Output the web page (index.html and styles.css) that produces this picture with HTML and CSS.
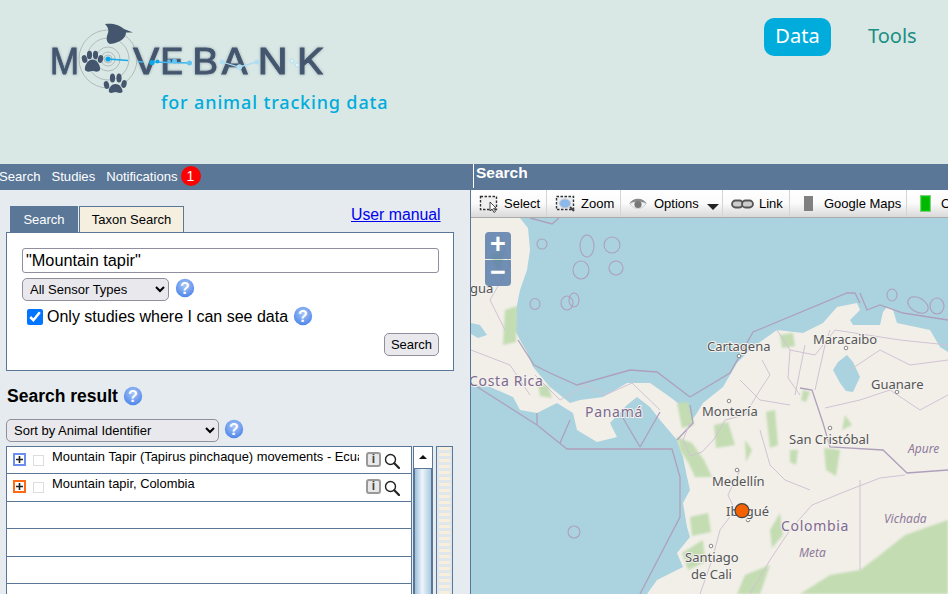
FILE: index.html
```html
<!DOCTYPE html>
<html lang="en">
<head>
    <meta charset="UTF-8">
    <meta name="viewport" content="width=device-width, initial-scale=1.0">
    <title>Movebank - Search</title>
    <link rel="stylesheet" href="styles.css">
</head>
<body>
    <svg class="defs" width="0" height="0">
        <defs>
            <radialGradient id="helpFill" cx="50%" cy="35%" r="65%">
                <stop offset="0" stop-color="#a9c6f6"/>
                <stop offset="1" stop-color="#4f86ea"/>
            </radialGradient>
        </defs>
        <symbol id="help" viewBox="0 0 20 20">
            <circle cx="10" cy="10" r="9.2" fill="url(#helpFill)"/>
            <text x="10" y="15.5" text-anchor="middle" class="help-mark">?</text>
        </symbol>
        <symbol id="lens" viewBox="0 0 16 16">
            <circle cx="6.5" cy="6.5" r="5" fill="#fff" stroke="#222" stroke-width="1.4"/>
            <path d="M10.3 10.3 L15 15" stroke="#222" stroke-width="2.2" stroke-linecap="round"/>
        </symbol>
        <symbol id="plus" viewBox="0 0 9 9">
            <path d="M4.5 1 V8 M1 4.5 H8" stroke="#222" stroke-width="1.6"/>
        </symbol>
    </svg>

    <header class="site-header">
        <svg class="logo" width="400" height="120" viewBox="0 0 400 120">
            <g fill="none" stroke="#aeb4b6" stroke-width="0.9">
                <circle cx="108" cy="59" r="29"/>
                <circle cx="108" cy="59" r="21"/>
                <circle cx="108" cy="59" r="12"/>
                <circle cx="108" cy="59" r="7"/>
                <circle cx="108" cy="59" r="4"/>
            </g>
            <text x="50" y="74" class="logo-word" textLength="29" lengthAdjust="spacingAndGlyphs">M</text>
            <text x="115 139 167 192 224 258" y="74" class="logo-word" transform="scale(1.15 1)">VEBANK</text>
            <path class="logo-dark" d="M105 24 C111 23 119 24 124 29 L133 32.5 L126 32.5 C126 38 120 43 110 44 C106 42 106 38 108 33 C109 30 108 27 105 24 Z"/>
            <g class="logo-dark">
                <ellipse cx="84.5" cy="59" rx="2.6" ry="4" transform="rotate(-15 84.5 59)"/>
                <ellipse cx="89.5" cy="55" rx="2.6" ry="4.2"/>
                <ellipse cx="95.5" cy="55" rx="2.6" ry="4.2"/>
                <ellipse cx="100.5" cy="59" rx="2.6" ry="4" transform="rotate(15 100.5 59)"/>
                <path d="M92.5 59.5 C97 59.5 101 66 100 70 C98 73 94 71 92.5 71 C91 71 87 73 85 70 C84 66 88 59.5 92.5 59.5 Z"/>
                <ellipse cx="106.5" cy="85" rx="2.6" ry="4" transform="rotate(-15 106.5 85)"/>
                <ellipse cx="112.5" cy="78" rx="2.6" ry="4.5"/>
                <ellipse cx="119" cy="78" rx="2.6" ry="4.5"/>
                <ellipse cx="124" cy="84" rx="2.6" ry="4" transform="rotate(15 124 84)"/>
                <path d="M115.5 84 C120 84 123 89 122.5 92 C120 94 117 92 115.5 92 C114 92 111 94 109 92 C108 89 111 84 115.5 84 Z"/>
            </g>
            <path d="M108 59 L128 60.5" stroke="#19a9e6" stroke-width="1.6"/>
            <path d="M138 61.5 L143 62 M152 62 L189 63" stroke="#3db6ee" stroke-width="1.3"/>
            <path d="M222 62 L239 67 L257 62" stroke="#a9dcf3" stroke-width="1.3" fill="none"/>
            <g fill="#0da6e6">
                <circle cx="108" cy="59" r="2.6"/>
                <circle cx="152" cy="62.5" r="2.6"/>
                <circle cx="157.5" cy="61.5" r="2"/>
            </g>
            <g fill="#62c3ef">
                <circle cx="169" cy="61" r="1.8"/>
                <circle cx="174.5" cy="61" r="2.5"/>
                <circle cx="189.5" cy="63" r="2.5"/>
            </g>
            <g fill="#b1def2">
                <circle cx="222" cy="62" r="2.5"/>
                <circle cx="239.5" cy="67" r="2.8"/>
                <circle cx="257" cy="62" r="2.5"/>
            </g>
            <circle cx="292" cy="61" r="2" fill="#e4f3f6" stroke="#b1def2"/>
            <circle cx="297" cy="65" r="2" fill="#e4f3f6" stroke="#b1def2"/>
        </svg>
        <div class="logo-tag">for animal tracking data</div>
        <nav class="site-nav">
            <a class="site-link active">Data</a>
            <a class="site-link">Tools</a>
        </nav>
    </header>

    <div class="bar">
        <div class="bar-left">
            <a>Search</a>
            <a>Studies</a>
            <a>Notifications</a>
            <span class="badge">1</span>
        </div>
        <div class="bar-right">Search</div>
    </div>

    <main class="main">
        <section class="side">
            <div class="tab-row">
                <span class="tab tab-on">Search</span>
                <span class="tab tab-off">Taxon Search</span>
                <a class="manual" href="#">User manual</a>
            </div>
            <form class="search-box">
                <input type="text" class="query" value="&quot;Mountain tapir&quot;">
                <div class="line">
                    <select class="pick pick-sensor"><option>All Sensor Types</option></select>
                    <svg class="help"><use href="#help"/></svg>
                </div>
                <label class="line check-line">
                    <input type="checkbox" class="check" checked>
                    <span>Only studies where I can see data</span>
                    <svg class="help"><use href="#help"/></svg>
                </label>
                <div class="actions"><button type="button" class="btn">Search</button></div>
            </form>

            <h2 class="result-title">Search result <svg class="help"><use href="#help"/></svg></h2>
            <div class="line sort-line">
                <select class="pick pick-sort"><option>Sort by Animal Identifier</option></select>
                <svg class="help"><use href="#help"/></svg>
            </div>

            <div class="results">
                <div class="list">
                    <div class="row">
                        <span class="expand expand-blue"><svg width="9" height="9"><use href="#plus"/></svg></span>
                        <span class="tick"></span>
                        <span class="name">Mountain Tapir (Tapirus pinchaque) movements - Ecuador</span>
                        <span class="info">i</span>
                        <svg class="lens"><use href="#lens"/></svg>
                    </div>
                    <div class="row">
                        <span class="expand expand-orange"><svg width="9" height="9"><use href="#plus"/></svg></span>
                        <span class="tick"></span>
                        <span class="name">Mountain tapir, Colombia</span>
                        <span class="info">i</span>
                        <svg class="lens"><use href="#lens"/></svg>
                    </div>
                    <div class="row"></div>
                    <div class="row"></div>
                    <div class="row"></div>
                    <div class="row"></div>
                </div>
                <div class="scroll">
                    <div class="scroll-up"></div>
                    <div class="scroll-track"></div>
                </div>
                <div class="strip"></div>
            </div>
        </section>

        <section class="map-pane">
            <div class="toolbar">
                <div class="tool tool-select">
                    <svg width="20" height="19" viewBox="0 0 20 19">
                        <rect x="1.5" y="2.5" width="16" height="13" fill="#f0f0f0" stroke="#333" stroke-width="1.4" stroke-dasharray="2.5 1.5"/>
                        <path d="M11 8 V17 L13 15 L15 18.5 L16.5 17.5 L14.5 14.5 L17 14 Z" fill="#fff" stroke="#333" stroke-width="0.9"/>
                    </svg>
                    <span>Select</span>
                </div>
                <div class="tool tool-zoom">
                    <svg width="21" height="19" viewBox="0 0 21 19">
                        <rect x="1.5" y="2.5" width="17" height="13" fill="#e8eef4" stroke="#333" stroke-width="1.4" stroke-dasharray="2.5 1.5"/>
                        <ellipse cx="10" cy="9.5" rx="5.5" ry="4.5" fill="#8db8ea" stroke="#ccc"/>
                        <path d="M15 13 L19 17" stroke="#444" stroke-width="2"/>
                    </svg>
                    <span>Zoom</span>
                </div>
                <div class="tool tool-options">
                    <svg width="20" height="14" viewBox="0 0 20 14">
                        <path d="M1 7 C5 0 15 0 19 7 C15 4 5 4 1 7 Z" fill="#888"/>
                        <path d="M2 7 C6 13 14 13 18 7 C14 4 6 4 2 7 Z" fill="#f2f2f2" stroke="#bbb" stroke-width="0.6"/>
                        <circle cx="10" cy="7.5" r="3.6" fill="#777"/>
                    </svg>
                    <span>Options</span>
                    <i class="drop"></i>
                </div>
                <div class="tool tool-link">
                    <svg width="23" height="10" viewBox="0 0 23 10">
                        <rect x="1" y="1.5" width="11" height="7" rx="3.5" fill="#ccc" stroke="#555" stroke-width="1.8"/>
                        <rect x="11" y="1.5" width="11" height="7" rx="3.5" fill="#ccc" stroke="#555" stroke-width="1.8"/>
                    </svg>
                    <span>Link</span>
                </div>
                <div class="tool tool-google">
                    <i class="swatch swatch-grey"></i>
                    <span>Google Maps</span>
                </div>
                <div class="tool tool-last">
                    <i class="swatch swatch-green"></i>
                    <span>Other</span>
                </div>
            </div>

            <div class="map">
                <svg class="map-svg" width="477" height="376" viewBox="471 218 477 376">
                    <rect x="471" y="218" width="477" height="376" fill="#aad3df"/>
                    <g class="soft">
                        <path fill="#f2efe9" d="M471 218 L520 218 L528 228 L530 250 L527 270 L520 290 L516 310 L515 330 L520 340 L527 352 L533 367 L550 387 L570 403 L580 400 L603 397 L627 383 L650 383 L670 397 L683 407 L690 423 L697 413 L703 403 L723 387 L737 363 L753 347 L777 330 L803 333 L823 323 L837 307 L857 303 L860 310 L850 320 L853 325 L880 325 L883 312 L887 307 L893 310 L897 323 L930 330 L940 347 L948 352 L948 594 L647 594 L657 580 L683 567 L677 553 L690 537 L687 527 L683 503 L690 490 L687 477 L683 457 L677 440 L660 420 L650 407 L637 397 L627 405 L610 423 L617 437 L597 442 L577 430 L573 413 L557 403 L537 413 L520 410 L513 397 L490 387 L471 385 Z"/>
                        <path fill="#aad3df" d="M833 370 L838 362 L847 355 L853 362 L860 377 L853 392 L846 391 L840 383 Z"/>
                        <path fill="#aad3df" d="M471 323 L480 325 L487 335 L478 338 L471 334 Z"/>
                    </g>
                    <g class="forest">
                        <path d="M880 555 L905 535 L925 528 L948 520 L948 594 L800 594 L830 575 L860 570 Z"/>
                        <path d="M677 437 L692 443 L704 460 L712 477 L695 477 L688 462 L680 450 Z"/>
                        <path d="M690 517 L708 513 L711 532 L692 536 Z"/>
                        <path d="M682 553 L703 540 L705 562 L688 570 Z"/>
                        <path d="M766 412 L775 410 L778 445 L770 448 Z"/>
                        <path d="M714 425 L728 422 L735 445 L716 448 Z"/>
                        <path d="M677 403 L688 402 L694 425 L682 428 Z"/>
                        <path d="M505 310 L517 306 L516 342 L503 345 Z"/>
                        <path d="M538 383 L548 386 L552 398 L540 396 Z"/>
                        <path d="M780 335 L793 333 L795 346 L782 348 Z"/>
                        <path d="M803 390 L810 392 L806 402 L801 400 Z"/>
                        <path d="M824 448 L840 450 L836 476 L826 470 Z"/>
                        <path d="M737 594 L745 575 L770 565 L760 594 Z"/>
                        <path d="M770 530 L780 513 L783 535 L772 548 Z"/>
                        <path d="M790 450 L798 450 L796 465 L790 462 Z"/>
                        <path d="M490 255 L505 250 L500 275 Z"/>
                        <path d="M845 415 L852 425 L842 430 Z"/>
                        <path d="M745 440 L752 450 L746 462 Z"/>
                    </g>
                    <g class="soft">
                        <g fill="none" stroke="#aea0bb" stroke-width="1.3">
                            <path d="M690 397 L730 373 L753 332 L847 293 L855 293 L860 303"/>
                            <path d="M860 293 L867 310 L880 305 L903 313 L948 320"/>
                            <path d="M550 373 L577 385 L630 370 L657 372 L690 397"/>
                            <path d="M518 340 L534 365 L550 373"/>
                            <path d="M471 383 L537 425 L567 449 L672 449 L680 477 L680 517 L640 594"/>
                            <path d="M640 447 L623 418 M640 447 L660 412 M560 443 L570 420 M537 425 L537 413"/>
                            <path d="M530 218 L552 224 L559 218"/>
                            <path d="M677 440 L693 423 L690 405"/>
                            <path d="M800 388 L812 390 L823 423 L830 447 L883 450 L907 473 L948 470"/>
                        </g>
                        <g fill="none" stroke="#aea0bb" stroke-width="1.1">
                            <ellipse cx="587" cy="246" rx="7" ry="11"/>
                            <ellipse cx="612" cy="245" rx="8" ry="8"/>
                            <ellipse cx="581" cy="270" rx="8" ry="9"/>
                            <ellipse cx="616" cy="268" rx="7" ry="7"/>
                            <circle cx="542" cy="244" r="5"/>
                            <ellipse cx="535" cy="304" rx="5" ry="5.5"/>
                            <ellipse cx="567" cy="303" rx="6" ry="7"/>
                            <ellipse cx="574" cy="300" rx="5" ry="7"/>
                            <circle cx="574" cy="532" r="6"/>
                            <ellipse cx="892" cy="295" rx="5" ry="6"/>
                            <ellipse cx="918" cy="305" rx="11" ry="7" transform="rotate(30 918 305)"/>
                            <ellipse cx="937" cy="306" rx="7" ry="8"/>
                        </g>
                        <g fill="none" stroke="#cfc3d3" stroke-width="1">
                            <path d="M690 423 L683 440 L690 456 L702 452 L715 438 L725 420 L745 415 L760 390 L770 375 L762 360"/>
                            <path d="M777 330 L790 350 L788 378 L800 395"/>
                            <path d="M815 390 L825 345 L830 330"/>
                            <path d="M825 408 L860 400 L890 390 L920 410 L948 395"/>
                            <path d="M850 370 L880 350 L910 365 L948 360"/>
                            <path d="M905 475 L880 478 L849 490 L812 505 L790 530 L770 560 L750 594"/>
                            <path d="M740 470 L728 495 L735 510 L720 530 L712 560 L700 594"/>
                            <path d="M760 430 L770 465 L785 480 L810 490"/>
                            <path d="M860 480 L860 570"/>
                            <path d="M535 375 L560 400 L585 385 L605 395 L632 383 L660 410"/>
                            <path d="M471 350 L510 365 L530 395"/>
                            <path d="M500 235 L510 265 L490 300 L505 330"/>
                            <path d="M790 350 L815 355 L835 330 L900 340 L948 345"/>
                            <path d="M795 395 L805 345 M740 380 L760 400 L790 405"/>
                        </g>
                        <g fill="#fff" stroke="#777" stroke-width="0.9">
                            <circle cx="739" cy="356" r="1.8"/>
                            <circle cx="729" cy="401" r="1.8"/>
                            <circle cx="846" cy="348" r="1.8"/>
                            <circle cx="897" cy="392" r="1.8"/>
                            <circle cx="830" cy="428" r="1.8"/>
                            <circle cx="737" cy="470" r="1.8"/>
                            <circle cx="748" cy="520" r="1.8"/>
                            <circle cx="711" cy="546" r="1.8"/>
                        </g>
                    </g>
                    <g class="place">
                        <text x="707" y="351">Cartagena</text>
                        <text x="813" y="344">Maracaibo</text>
                        <text x="702" y="416">Montería</text>
                        <text x="789" y="444">San Cristóbal</text>
                        <text x="871" y="389">Guanare</text>
                        <text x="712" y="486">Medellín</text>
                        <text x="726" y="516">Ibagué</text>
                        <text x="685" y="562">Santiago</text>
                        <text x="691" y="579">de Cali</text>
                        <text x="470" y="293">gua</text>
                    </g>
                    <g class="country">
                        <text x="585" y="417">Panamá</text>
                        <text x="781" y="531">Colombia</text>
                        <text x="469" y="386">Costa Rica</text>
                    </g>
                    <g class="region">
                        <text x="908" y="453">Apure</text>
                        <text x="884" y="523">Vichada</text>
                        <text x="799" y="557">Meta</text>
                    </g>
                    <circle cx="742" cy="510.7" r="7" fill="#f46200" stroke="#444" stroke-width="1.2"/>
                </svg>
                <div class="zoom-box">
                    <span class="zoom-btn">+</span>
                    <span class="zoom-btn">−</span>
                </div>
            </div>
        </section>
    </main>
</body>
</html>
```

FILE: styles.css
```css
* {
    box-sizing: border-box;
    margin: 0;
    padding: 0;
}

html, body {
    height: 594px;
    overflow: hidden;
}

body {
    font-family: "Liberation Sans", Arial, sans-serif;
    background-color: #e6ebef;
    color: #000;
    display: flex;
    flex-direction: column;
}

.defs {
    display: block;
    height: 0;
}

.help-mark {
    font-family: "Liberation Sans", Arial, sans-serif;
    font-size: 16px;
    font-weight: bold;
    fill: #fff;
}

/* top band */
.site-header {
    height: 164px;
    flex: none;
    background: #d9e8e5;
    position: relative;
}

.logo {
    position: absolute;
    left: 0;
    top: 0;
}

.logo-word {
    font-family: "Inter", sans-serif;
    font-size: 35px;
    font-weight: 400;
    fill: #44566e;
    stroke: #44566e;
    stroke-width: 0.8px;
    filter: drop-shadow(0 0 1.5px rgba(68, 86, 110, 0.45));
}

.logo-dark {
    fill: #44566e;
}

.logo-tag {
    position: absolute;
    left: 161px;
    top: 90px;
    font-family: "Noto Sans", sans-serif;
    font-size: 18px;
    font-weight: 500;
    letter-spacing: 0.85px;
    line-height: 24px;
    color: #00acdc;
    white-space: nowrap;
}

.site-nav {
    position: absolute;
    left: 764px;
    top: 18px;
    display: flex;
    align-items: center;
    gap: 37px;
}

.site-link {
    font-family: "Noto Sans", sans-serif;
    font-size: 20px;
    line-height: 36px;
    height: 38px;
    color: #1a8f84;
}

.site-link.active {
    width: 67px;
    text-align: center;
    color: #fff;
    background: #00acdc;
    border-radius: 10px;
}

/* blue bar */
.bar {
    height: 26px;
    flex: none;
    display: flex;
    background: #5a7797;
    color: #fff;
}

.bar-left {
    width: 473px;
    flex: none;
    display: flex;
    align-items: center;
    font-size: 13.1px;
    padding-bottom: 2px;
    text-indent: -1px;
}

.bar-left a {
    margin-right: 12px;
}

.bar-left a:nth-child(3) {
    margin-right: 3px;
}

.badge {
    width: 20px;
    height: 20px;
    border-radius: 50%;
    background: #f00;
    text-align: center;
    text-indent: 0;
    line-height: 20px;
    font-size: 14px;
}

.bar-right {
    flex: 1;
    border-left: 1px solid #fff;
    height: 24px;
    padding-left: 2px;
    font-size: 15.5px;
    font-weight: bold;
    line-height: 17px;
}

.main {
    flex: 1;
    display: flex;
    min-height: 0;
}

/* left side */
.side {
    width: 470px;
    flex: none;
    padding-top: 16px;
    overflow: hidden;
}

.tab-row {
    height: 26px;
    display: flex;
    padding-left: 10px;
    gap: 1px;
}

.tab {
    height: 26px;
    font-size: 13px;
    line-height: 25px;
    text-align: center;
    border: 1px solid #5a7797;
    border-bottom: 0;
}

.tab-on {
    width: 68px;
    background: #5a7797;
    color: #fff;
}

.tab-off {
    width: 105px;
    background: #f5efe0;
}

.manual {
    margin-left: 166px;
    font-size: 15.8px;
    line-height: 18px;
    color: #0000ee;
}

.search-box {
    width: 448px;
    height: 139px;
    margin-left: 6px;
    padding: 15px 14px 0 15px;
    background: #fff;
    border: 1px solid #5a7797;
}

.query {
    display: block;
    width: 100%;
    height: 25px;
    padding: 0 3px;
    font-family: inherit;
    font-size: 16.3px;
    border: 1px solid #8f8f9d;
    border-radius: 3px;
}

.line {
    display: flex;
    align-items: center;
}

.pick {
    height: 23px;
    font-family: inherit;
    font-size: 13px;
    padding-left: 3px;
    background-color: #e9e9ed;
    border: 1px solid #8f8f9d;
    border-radius: 5px;
}

.pick-sensor {
    width: 147px;
    margin-top: 5px;
}

.pick-sort {
    width: 213px;
}

.help {
    width: 20px;
    height: 20px;
    flex: none;
}

.pick-sensor + .help {
    margin-left: 6px;
    margin-top: 2px;
}

.pick-sort + .help {
    margin-left: 5px;
    margin-top: -3px;
}

.check-line {
    margin-top: 4px;
    padding-left: 5px;
    height: 24px;
    font-size: 16px;
    white-space: nowrap;
}

.check {
    width: 16px;
    height: 16px;
    margin-right: 4px;
    accent-color: #0075ff;
}

.check-line .help {
    margin-left: 5px;
    margin-top: -3px;
}

.actions {
    display: flex;
    justify-content: flex-end;
    margin-top: 4px;
}

.btn {
    width: 55px;
    height: 23px;
    font-family: inherit;
    font-size: 13px;
    background: #e9e9ed;
    border: 1px solid #8f8f9d;
    border-radius: 5px;
}

.result-title {
    display: flex;
    align-items: center;
    gap: 5px;
    margin: 14px 0 0 7px;
    height: 22px;
    font-size: 17.5px;
}

.sort-line {
    margin: 12px 0 0 6px;
}

/* result list */
.results {
    display: flex;
    margin: 4px 0 0 6px;
}

.list {
    width: 406px;
    flex: none;
    background: #fff;
    border: 1px solid #5a7797;
    border-bottom: 0;
}

.row {
    height: 27.4px;
    display: flex;
    align-items: flex-start;
    border-bottom: 1px solid #5a7797;
    position: relative;
}

.expand {
    width: 13px;
    height: 13px;
    margin: 6px 0 0 6px;
    display: flex;
    align-items: center;
    justify-content: center;
    background: #fff;
    border: 2px solid;
    flex: none;
}

.expand-blue {
    border-color: #6b8ef0;
}

.expand-orange {
    border-color: #ff6a13;
}

.tick {
    width: 11px;
    height: 11px;
    margin: 8px 0 0 7px;
    border: 1px solid #ddd;
    flex: none;
}

.name {
    width: 307px;
    margin: 2px 0 0 8px;
    font-size: 12.9px;
    line-height: 16px;
    white-space: nowrap;
    overflow: hidden;
    flex: none;
}

.info {
    width: 15px;
    height: 15px;
    margin: 5px 0 0 7px;
    flex: none;
    background: #e8e8e8;
    border: 2px solid #999;
    border-radius: 3px;
    text-align: center;
    font-size: 12px;
    line-height: 11px;
    font-weight: bold;
    color: #444;
}

.lens {
    width: 16px;
    height: 16px;
    margin: 6px 0 0 3px;
    flex: none;
}

.scroll {
    width: 20px;
    flex: none;
    margin-left: 1px;
    border: 1px solid #5a7797;
    border-bottom: 0;
    height: 160px;
    display: flex;
    flex-direction: column;
}

.scroll-up {
    height: 21px;
    background: #fff;
    position: relative;
}

.scroll-up::after {
    content: "";
    position: absolute;
    left: 5px;
    top: 8px;
    border-left: 4px solid transparent;
    border-right: 4px solid transparent;
    border-bottom: 4px solid #111;
}

.scroll-track {
    flex: 1;
    border: 1px solid #5a7797;
    border-bottom: 0;
    background: linear-gradient(to right, #9dc0dd, #eef5fa 45%, #a9c9e1);
}

.strip {
    width: 17px;
    height: 160px;
    flex: none;
    margin-left: 3px;
    border: 1px solid #5a7797;
    border-bottom: 0;
    background-color: #dfe7ed;
    background-image: repeating-linear-gradient(to bottom, #f7efdc 0, #f7efdc 3px, #dfe7ed 3px, #dfe7ed 6px);
    background-size: 11px 100%;
    background-position: center 0;
    background-repeat: no-repeat;
}

/* map side */
.map-pane {
    flex: 1;
    min-width: 0;
    display: flex;
    flex-direction: column;
    border-left: 1px solid #5a7797;
}

.toolbar {
    height: 28px;
    flex: none;
    display: flex;
    align-items: center;
    overflow: hidden;
    font-size: 13px;
    white-space: nowrap;
    background: linear-gradient(to bottom, #fff, #fafafa 50%, #d9d9d9);
    border-bottom: 1px solid #aaa;
}

.tool {
    height: 100%;
    display: flex;
    align-items: center;
    flex: none;
    border-right: 1px solid #d4d4d4;
}

.tool-select {
    width: 76px;
    padding-left: 8px;
    gap: 5px;
}

.tool-zoom {
    width: 74px;
    padding-left: 8px;
    gap: 5px;
}

.tool-options {
    width: 102px;
    padding-left: 7px;
    gap: 6px;
}

.drop {
    margin: 7px 0 0 2px;
    border-left: 6px solid transparent;
    border-right: 6px solid transparent;
    border-top: 6px solid #222;
}

.tool-link {
    width: 67px;
    padding-left: 8px;
    gap: 5px;
}

.tool-google {
    width: 117px;
    padding-left: 14px;
    gap: 11px;
}

.tool-last {
    border-right: 0;
    padding-left: 14px;
    gap: 11px;
}

.swatch {
    width: 9px;
    height: 15px;
    display: block;
}

.swatch-grey {
    background: #808080;
}

.swatch-green {
    background: #00b800;
    box-shadow: inset 0 0 0 1px #00d000;
    outline: 1px solid #86c986;
}

.map {
    flex: 1;
    position: relative;
    overflow: hidden;
}

.map-svg {
    display: block;
}

.soft {
    filter: blur(0.4px);
}

.forest {
    fill: #c3dcb2;
    filter: blur(1.2px);
}

.place text {
    font-family: "Noto Sans", sans-serif;
    font-size: 13px;
    fill: #555;
    stroke: #f4f2ee;
    stroke-width: 2px;
    paint-order: stroke;
}

.country text {
    font-family: "Noto Sans", sans-serif;
    font-size: 14px;
    letter-spacing: 0.7px;
    fill: #7e6a8e;
    stroke: #f4f2ee;
    stroke-width: 2px;
    paint-order: stroke;
}

.region text {
    font-family: "Noto Sans", sans-serif;
    font-size: 12px;
    font-style: italic;
    fill: #8f7a9a;
}

.zoom-box {
    position: absolute;
    left: 14px;
    top: 14px;
    width: 26px;
    display: flex;
    flex-direction: column;
    gap: 1px;
}

.zoom-btn {
    height: 26.5px;
    background: rgba(90, 126, 170, 0.85);
    color: #fff;
    font-size: 27px;
    font-weight: bold;
    line-height: 25px;
    text-align: center;
}

.zoom-btn:first-child {
    border-radius: 4px 4px 0 0;
}

.zoom-btn:last-child {
    border-radius: 0 0 4px 4px;
}
```
